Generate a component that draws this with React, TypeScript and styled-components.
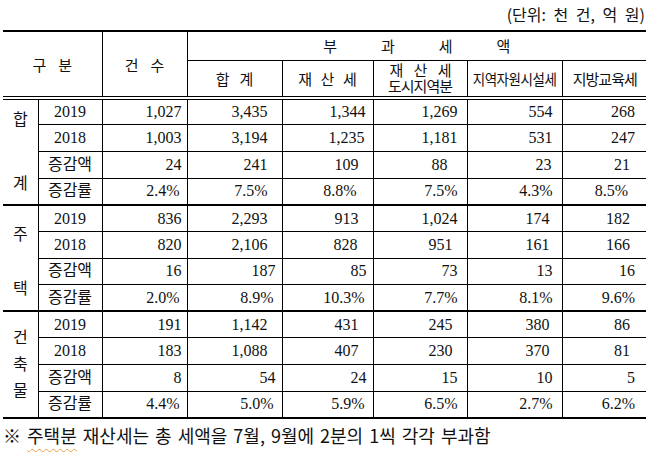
import styled, { createGlobalStyle } from "styled-components";

type Cell = [string, number];
type Group = { label: string[]; pad: string; rows: { name: string; cells: Cell[] }[] };

const groups: Group[] = [
  {
    label: ["합", "계"],
    pad: "10px 0 14px",
    rows: [
      { name: "2019", cells: [["1,027", 5], ["3,435", 14], ["1,344", 7], ["1,269", 9], ["554", 9], ["268", 11]] },
      { name: "2018", cells: [["1,003", 5], ["3,194", 14], ["1,235", 8], ["1,181", 9], ["531", 9], ["247", 11]] },
      { name: "증감액", cells: [["24", 5], ["241", 14], ["109", 14], ["88", 19], ["23", 10], ["21", 16]] },
      { name: "증감률", cells: [["2.4%", 7], ["7.5%", 14], ["8.8%", 16], ["7.5%", 9], ["4.3%", 9], ["8.5%", 18]] },
    ],
  },
  {
    label: ["주", "택"],
    pad: "19px 0 15px",
    rows: [
      { name: "2019", cells: [["836", 5], ["2,293", 14], ["913", 14], ["1,024", 9], ["174", 12], ["182", 16]] },
      { name: "2018", cells: [["820", 5], ["2,106", 14], ["828", 15], ["951", 14], ["161", 12], ["166", 16]] },
      { name: "증감액", cells: [["16", 5], ["187", 6], ["85", 6], ["73", 9], ["13", 9], ["16", 11]] },
      { name: "증감률", cells: [["2.0%", 7], ["8.9%", 8], ["10.3%", 8], ["7.7%", 9], ["8.1%", 9], ["9.6%", 11]] },
    ],
  },
  {
    label: ["건", "축", "물"],
    pad: "16px 0 19px",
    rows: [
      { name: "2019", cells: [["191", 5], ["1,142", 14], ["431", 14], ["245", 14], ["380", 12], ["86", 16]] },
      { name: "2018", cells: [["183", 5], ["1,088", 14], ["407", 14], ["230", 14], ["370", 12], ["81", 16]] },
      { name: "증감액", cells: [["8", 5], ["54", 6], ["24", 6], ["15", 9], ["10", 9], ["5", 11]] },
      { name: "증감률", cells: [["4.4%", 7], ["5.0%", 8], ["5.9%", 8], ["6.5%", 9], ["2.7%", 9], ["6.2%", 11]] },
    ],
  },
];

const colWidths = [35, 64, 85, 95, 91, 94, 95, 84];

const App = () => {
  return (
    <Page>
      <GlobalStyle />
      <Unit>(단위: 천 건, 억 원)</Unit>
      <Table>
        <colgroup>
          {colWidths.map((w, i) => (
            <col key={i} style={{ width: w }} />
          ))}
        </colgroup>
        <Head>
          <TopRow>
            <HeadCell colSpan={2} rowSpan={2}>
              <Label $ls={12}>구분</Label>
            </HeadCell>
            <HeadCell rowSpan={2}>
              <Label $ls={12}>건수</Label>
            </HeadCell>
            <HeadCell colSpan={6}>
              <Label $ls={44}>부과세액</Label>
            </HeadCell>
          </TopRow>
          <SubRow>
            <HeadCell>
              <Label $ls={10}>합계</Label>
            </HeadCell>
            <HeadCell>
              <Label $ls={8.5}>재산세</Label>
            </HeadCell>
            <HeadCell>
              <TwoLine>{"재\u2002  산\u2002  세\n도시지역분"}</TwoLine>
            </HeadCell>
            <HeadCell>
              <Narrow>지역자원시설세</Narrow>
            </HeadCell>
            <HeadCell>
              <Label $ls={-1}>지방교육세</Label>
            </HeadCell>
          </SubRow>
        </Head>
        {groups.map((g) => (
          <Body key={g.label.join("")}>
            {g.rows.map((r, ri) => (
              <Row key={r.name}>
                {ri === 0 && (
                  <GroupCell rowSpan={g.rows.length}>
                    <GroupLabel $pad={g.pad}>
                      {g.label.map((ch) => (
                        <span key={ch}>{ch}</span>
                      ))}
                    </GroupLabel>
                  </GroupCell>
                )}
                <NameCell>{r.name}</NameCell>
                {r.cells.map(([v, pr], ci) => (
                  <Num key={ci} $pr={pr}>
                    {v}
                  </Num>
                ))}
              </Row>
            ))}
          </Body>
        ))}
      </Table>
      <Note>
        ※ <Squiggle>주택분</Squiggle> 재산세는 총 세액을 7월, 9월에 2분의 1씩 각각 부과함
      </Note>
    </Page>
  );
};

const GlobalStyle = createGlobalStyle`
  body {
    margin: 0;
    background: #fff;
  }
`;

const Page = styled.div`
  width: 649px;
  height: 455px;
  box-sizing: border-box;
  padding: 0 3px;
  overflow: hidden;
  color: #111;
`;

const Unit = styled.div`
  height: 30px;
  line-height: 28px;
  text-align: right;
  padding-right: 1px;
  font-family: "Noto Sans CJK KR", sans-serif;
  font-size: 16px;
  word-spacing: 4px;
`;

const Table = styled.table`
  width: 643px;
  border-collapse: collapse;
  table-layout: fixed;
  border-top: 2px solid #000;
  border-bottom: 2px solid #000;
  font-family: "Liberation Serif", "Noto Sans CJK KR", serif;
`;

const Head = styled.thead`
  border-bottom: 4px double #000;
`;

const TopRow = styled.tr`
  height: 29px;
`;

const SubRow = styled.tr`
  height: 38px;
`;

const HeadCell = styled.th`
  padding: 0;
  font-weight: 400;
  font-size: 15px;
  font-family: "Noto Sans CJK KR", sans-serif;
  line-height: 17px;
  white-space: nowrap;
  border-right: 1px solid #000;
  border-bottom: 1px solid #000;
  &:last-child {
    border-right: none;
  }
`;

const Label = styled.span<{ $ls: number }>`
  display: inline-block;
  letter-spacing: ${(p) => p.$ls}px;
  padding-left: ${(p) => Math.max(p.$ls, 0)}px;
  margin-right: ${(p) => Math.min(p.$ls, 0)}px;
`;

const TwoLine = styled.div`
  white-space: pre;
  text-align: center;
  letter-spacing: -1px;
  line-height: 16px;
`;

const Narrow = styled.span`
  display: inline-block;
  letter-spacing: -0.5px;
  transform: scaleX(0.9);
  transform-origin: center;
`;

const Body = styled.tbody`
  border-bottom: 2px solid #000;
`;

const Row = styled.tr`
  height: 26.6px;
`;

const BaseCell = styled.td`
  padding: 0;
  font-size: 16px;
  line-height: 18px;
  border-right: 1px solid #000;
  border-bottom: 1px solid #000;
  white-space: nowrap;
  &:last-child {
    border-right: none;
  }
`;

const GroupCell = styled(BaseCell)`
  font-family: "Noto Sans CJK KR", sans-serif;
  vertical-align: top;
`;

const GroupLabel = styled.div<{ $pad: string }>`
  display: flex;
  flex-direction: column;
  align-items: center;
  justify-content: space-between;
  height: 104px;
  box-sizing: border-box;
  padding: ${(p) => p.$pad};
  line-height: 16px;
`;

const NameCell = styled(BaseCell)`
  text-align: center;
`;

const Num = styled(BaseCell)<{ $pr: number }>`
  text-align: right;
  padding-right: ${(p) => p.$pr}px;
`;

const Note = styled.p`
  margin: 0;
  padding-top: 3px;
  font-family: "Noto Sans CJK KR", sans-serif;
  font-size: 18px;
  line-height: 26px;
  word-spacing: 2px;
  white-space: nowrap;
`;

const Squiggle = styled.span`
  text-decoration: underline wavy #e8a040;
  text-decoration-thickness: 1px;
  text-underline-offset: 5px;
`;

export default App;
